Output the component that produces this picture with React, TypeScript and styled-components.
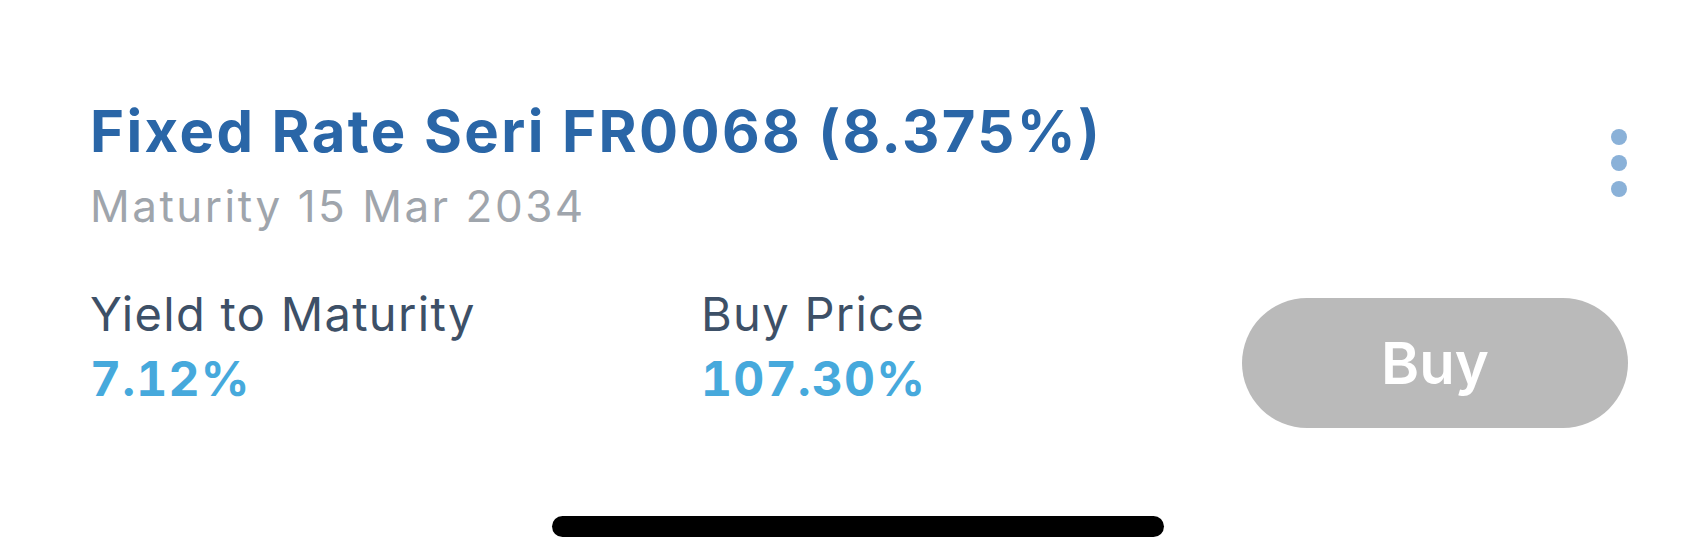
import React from "react";
import styled, { createGlobalStyle } from "styled-components";

const GlobalStyle = createGlobalStyle`
  html, body {
    margin: 0;
    padding: 0;
    background: #ffffff;
  }
  body {
    font-family: "Inter", "Noto Sans", sans-serif;
    -webkit-font-smoothing: antialiased;
  }
`;

interface Stat {
  label: string;
  value: string;
}

const stats: Stat[] = [
  { label: "Yield to Maturity", value: "7.12%" },
  { label: "Buy Price", value: "107.30%" },
];

const MoreIcon = () => (
  <svg width="18" height="78" viewBox="0 0 18 78" aria-hidden="true">
    <circle cx="9" cy="9" r="8" fill="#8ab1d8" />
    <circle cx="9" cy="35" r="8" fill="#8ab1d8" />
    <circle cx="9" cy="61" r="8" fill="#8ab1d8" />
  </svg>
);

const App = () => {
  return (
    <>
      <GlobalStyle />
      <Screen>
        <Card>
          <TopRow>
            <TitleBlock>
              <Title>Fixed Rate Seri FR0068 (8.375%)</Title>
              <Subtitle>Maturity 15 Mar 2034</Subtitle>
            </TitleBlock>
            <MoreButton aria-label="More">
              <MoreIcon />
            </MoreButton>
          </TopRow>
          <BottomRow>
            <Stats>
              {stats.map((s) => (
                <StatItem key={s.label}>
                  <StatLabel>{s.label}</StatLabel>
                  <StatValue>{s.value}</StatValue>
                </StatItem>
              ))}
            </Stats>
            <BuyButton disabled>Buy</BuyButton>
          </BottomRow>
        </Card>
        <HomeBar>
          <Indicator />
        </HomeBar>
      </Screen>
    </>
  );
};

const Screen = styled.div`
  display: flex;
  flex-direction: column;
  width: 1702px;
  height: 550px;
  background: #ffffff;
  overflow: hidden;
`;
const Card = styled.div`
  display: flex;
  flex-direction: column;
  padding: 97px 74px 0 90px;
`;
const TopRow = styled.div`
  display: flex;
  justify-content: space-between;
  align-items: flex-start;
`;
const TitleBlock = styled.div`
  display: flex;
  flex-direction: column;
  gap: 15px;
`;
const Title = styled.div`
  font-size: 58px;
  line-height: 68px;
  font-weight: 700;
  color: #2a66a7;
  letter-spacing: 2.4px;
`;
const Subtitle = styled.div`
  font-size: 44px;
  line-height: 52px;
  font-weight: 400;
  color: #9fa5ac;
  letter-spacing: 2.5px;
`;
const MoreButton = styled.button`
  display: flex;
  padding: 0;
  margin: 31px 0 0 0;
  border: none;
  background: transparent;
  cursor: pointer;
`;
const BottomRow = styled.div`
  display: flex;
  align-items: flex-start;
  justify-content: space-between;
  margin-top: 54px;
`;
const Stats = styled.div`
  display: grid;
  grid-template-columns: 611px auto;
`;
const StatItem = styled.div`
  display: flex;
  flex-direction: column;
  gap: 10px;
`;
const StatLabel = styled.div`
  font-size: 47px;
  line-height: 56px;
  font-weight: 400;
  color: #3d5067;
  letter-spacing: 1.3px;
`;
const StatValue = styled.div`
  font-size: 48px;
  line-height: 54px;
  font-weight: 700;
  color: #46a9dc;
  letter-spacing: 1.2px;
  font-variant-numeric: tabular-nums;
`;
const BuyButton = styled.button`
  width: 386px;
  height: 130px;
  margin-top: 12px;
  border: none;
  border-radius: 65px;
  background: #bababa;
  color: #ffffff;
  font-family: "Inter", "Noto Sans", sans-serif;
  font-size: 58px;
  font-weight: 600;
  display: flex;
  align-items: center;
  justify-content: center;
  padding: 0;
`;
const HomeBar = styled.div`
  display: flex;
  justify-content: center;
  margin-top: auto;
  padding: 0 0 13px 14px;
`;
const Indicator = styled.div`
  width: 612px;
  height: 21px;
  border-radius: 11px;
  background: #000000;
`;

export default App;
